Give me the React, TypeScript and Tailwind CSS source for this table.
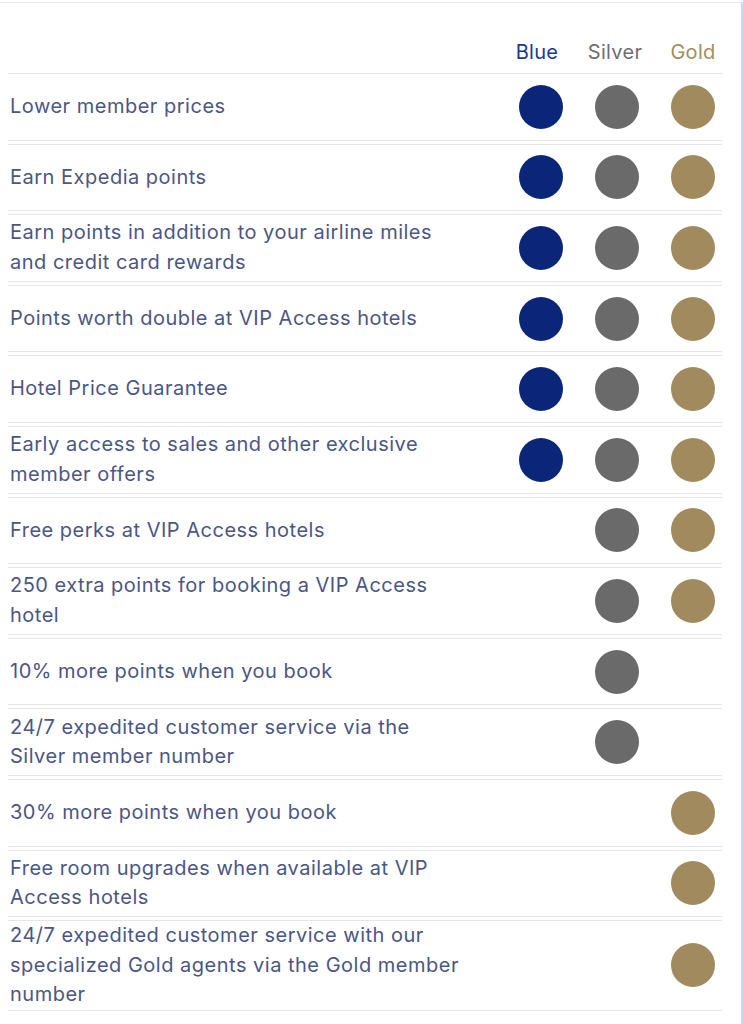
const tiers = [
  { name: "Blue", text: "text-[#1b3a8f] -translate-x-[4px]", dot: "bg-[#0b2679]" },
  { name: "Silver", text: "text-[#6f6f6f] -translate-x-[2px]", dot: "bg-[#6a6a6a]" },
  { name: "Gold", text: "text-[#a28d5f]", dot: "bg-[#a08a5e]" },
];

const benefits: { label: string; tiers: boolean[] }[] = [
  { label: "Lower member prices", tiers: [true, true, true] },
  { label: "Earn Expedia points", tiers: [true, true, true] },
  {
    label: "Earn points in addition to your airline miles and credit card rewards",
    tiers: [true, true, true],
  },
  { label: "Points worth double at VIP Access hotels", tiers: [true, true, true] },
  { label: "Hotel Price Guarantee", tiers: [true, true, true] },
  {
    label: "Early access to sales and other exclusive member offers",
    tiers: [true, true, true],
  },
  { label: "Free perks at VIP Access hotels", tiers: [false, true, true] },
  {
    label: "250 extra points for booking a VIP Access hotel",
    tiers: [false, true, true],
  },
  { label: "10% more points when you book", tiers: [false, true, false] },
  {
    label: "24/7 expedited customer service via the Silver member number",
    tiers: [false, true, false],
  },
  { label: "30% more points when you book", tiers: [false, false, true] },
  {
    label: "Free room upgrades when available at VIP Access hotels",
    tiers: [false, false, true],
  },
  {
    label:
      "24/7 expedited customer service with our specialized Gold agents via the Gold member number",
    tiers: [false, false, true],
  },
];

const App = () => {
  return (
    <div
      className="w-[743px] h-[1024px] bg-white overflow-hidden"
      style={{ fontFamily: "Inter, 'Liberation Sans', sans-serif" }}
    >
      <div className="h-full mt-[2px] border-t border-[#e9e9e9] border-r-2 border-r-[#c9d9f2]">
        <div className="pl-[8px] pr-[19px]">
          {/* tier header */}
          <div className="h-[70px] flex items-end justify-end gap-[32px] pr-[7px] pb-[6px]">
            {tiers.map((t) => (
              <div key={t.name} className="w-[44px] flex justify-center">
                <span
                  className={`text-[20px] leading-[29px] tracking-[0.3px] whitespace-nowrap ${t.text}`}
                >
                  {t.name}
                </span>
              </div>
            ))}
          </div>

          {benefits.map((b, i) => (
            <div
              key={b.label}
              className={`flex items-center min-h-[67.6px] border-y border-[#e6e6e6] ${
                i > 0 ? "mt-[3px]" : ""
              }`}
            >
              <div className="flex-1 min-w-0 pl-[2px]">
                <p className="w-[455px] text-[20px] leading-[29.5px] tracking-[0.5px] text-[#4b5684]">
                  {b.label}
                </p>
              </div>
              <div className="flex gap-[32px] pr-[7px]">
                {b.tiers.map((on, j) => (
                  <div
                    key={j}
                    className={`w-[44px] h-[44px] rounded-full ${on ? tiers[j].dot : ""}`}
                  />
                ))}
              </div>
            </div>
          ))}
        </div>
      </div>
    </div>
  );
};

export default App;
